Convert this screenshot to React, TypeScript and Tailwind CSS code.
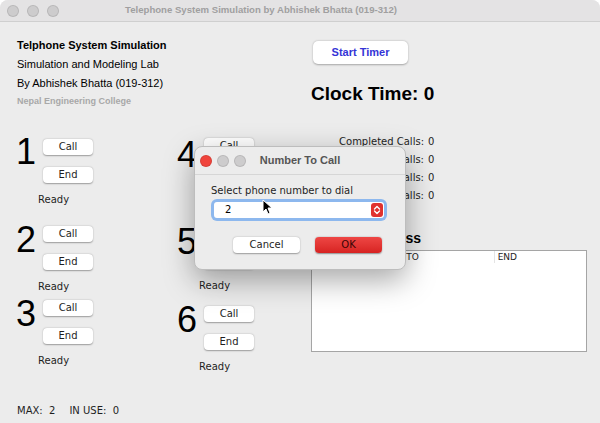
import React from "react";

const ui = { fontFamily: '"DejaVu Sans", "Liberation Sans", sans-serif' };
const helv = { fontFamily: '"Liberation Sans", Arial, sans-serif' };

const Btn = ({ label }: { label: string }) => (
    <div className="w-[50px] h-[16px] bg-white rounded-[4px] shadow-[0_0.5px_1.5px_rgba(0,0,0,0.35)] flex items-center justify-center text-[10px] text-[#1e1e1e] leading-none">
        {label}
    </div>
);

const Phone = ({ num, mt, digitTop }: { num: string; mt: string; digitTop: string }) => (
    <div className={"flex flex-col " + mt}>
        <div className="flex">
            <div className={"w-[27px] text-[36px] leading-none text-black " + digitTop} style={helv}>{num}</div>
            <div className="flex flex-col gap-[12px]">
                <Btn label="Call" />
                <Btn label="End" />
            </div>
        </div>
        <div className="ml-[22px] mt-[12px] text-[10px] leading-none text-[#1e1e1e]">Ready</div>
    </div>
);

const Light = ({ color }: { color: string }) => (
    <div className={"w-[12px] h-[12px] rounded-full border border-black/10 " + color} />
);

export default function App() {
    return (
        <div className="w-[600px] h-[423px] bg-[#ececec] relative overflow-hidden rounded-t-[8px]" style={ui}>
            {/* title bar */}
            <div className="h-[22px] bg-[#e4e3e4] border-b border-[#cfcfcf] flex items-center relative">
                <div className="flex gap-[8px] ml-[7px]">
                    <Light color="bg-[#cdcccd]" />
                    <Light color="bg-[#cdcccd]" />
                    <Light color="bg-[#cdcccd]" />
                </div>
                <div className="absolute inset-0 pr-[78px] flex items-center justify-center text-[9.6px] font-bold text-[#a09fa0]" style={helv}>
                    Telephone System Simulation by Abhishek Bhatta (019-312)
                </div>
            </div>

            {/* header */}
            <div className="flex">
                <div className="w-[296px] pl-[17px] pt-[16px] flex flex-col" style={helv}>
                    <div className="text-[11px] font-bold text-black leading-[14px]">Telphone System Simulation</div>
                    <div className="text-[11px] text-black leading-[14px] mt-[5px]">Simulation and Modeling Lab</div>
                    <div className="text-[11px] text-black leading-[14px] mt-[5px]">By Abhishek Bhatta (019-312)</div>
                    <div className="text-[9px] font-bold text-[#a8a8a8] leading-[12px] mt-[5px]">Nepal Engineering College</div>
                </div>
                <div className="flex flex-col pt-[19px] pl-[17px]">
                    <div className="w-[95px] h-[23px] bg-white rounded-[5px] shadow-[0_0.5px_2px_rgba(0,0,0,0.3)] flex items-center justify-center text-[11px] font-bold text-[#3434d6]" style={helv}>
                        Start Timer
                    </div>
                    <div className="mt-[20px] -ml-[2px] text-[19px] font-bold text-black leading-none" style={helv}>Clock Time: 0</div>
                </div>
            </div>

            {/* body */}
            <div className="flex">
                <div className="w-[177px] pl-[16px] flex flex-col">
                    <Phone num="1" mt="mt-[32px]" digitTop="-mt-[5px]" />
                    <Phone num="2" mt="mt-[21px]" digitTop="-mt-[4px]" />
                    <Phone num="3" mt="mt-[8px]" digitTop="-mt-[4px]" />
                </div>
                <div className="w-[134px] flex flex-col">
                    <Phone num="4" mt="mt-[31px]" digitTop="-mt-[1px]" />
                    <Phone num="5" mt="mt-[21px]" digitTop="-mt-[1px]" />
                    <Phone num="6" mt="mt-[15px]" digitTop="-mt-[4px]" />
                </div>
                <div className="flex flex-col pt-[29px]">
                    <div className="grid grid-cols-[113px_auto] gap-x-[4px] gap-y-[6px] text-[10px] leading-[12px] text-[#1e1e1e]">
                        <div className="text-right">Completed Calls:</div><div>0</div>
                        <div className="text-right">Blocked Calls:</div><div>0</div>
                        <div className="text-right">Dropped Calls:</div><div>0</div>
                        <div className="text-right">Busy Calls:</div><div>0</div>
                    </div>
                    <div className="w-[110px] flex justify-end mt-[29px]">
                        <span className="shrink-0 whitespace-nowrap text-[14px] font-bold leading-none text-black" style={helv}>Calls In Progress</span>
                    </div>
                    <div className="mt-[5px] w-[276px] h-[102px] bg-white border border-[#a5a5a5]">
                        <div className="grid grid-cols-3 text-[9px] leading-[12px] text-[#1e1e1e]">
                            <div className="pl-[3px] border-r border-[#e4e4e4]">FROM</div>
                            <div className="pl-[3px] border-r border-[#e4e4e4]">TO</div>
                            <div className="pl-[3px]">END</div>
                        </div>
                    </div>
                </div>
            </div>

            <div className="absolute left-[17px] top-[405px] text-[10px] leading-[12px] text-[#1e1e1e] flex gap-[14px]">
                <span>MAX:&nbsp; 2</span>
                <span>IN USE:&nbsp; 0</span>
            </div>

            {/* dialog */}
            <div className="absolute left-[194px] top-[146px] w-[212px] h-[124px] bg-[#ececec] rounded-[8px] border border-[#bdbdbd] shadow-[0_10px_30px_rgba(0,0,0,0.35)] flex flex-col">
                <div className="h-[28px] border-b border-[#d6d6d6] flex items-center relative">
                    <div className="flex gap-[5px] ml-[5px]">
                        <Light color="bg-[#f0443c]" />
                        <Light color="bg-[#cdcccd]" />
                        <Light color="bg-[#cdcccd]" />
                    </div>
                    <div className="absolute inset-0 flex items-center justify-center text-[11px] font-bold text-[#555]" style={helv}>
                        Number To Call
                    </div>
                </div>
                <div className="pl-[16px] pt-[10px] text-[10px] leading-[12px] text-[#1e1e1e]">Select phone number to dial</div>
                <div className="ml-[19px] mt-[5px] w-[170px] h-[16px] bg-white rounded-[3px] ring-[3px] ring-[#8db8ee] flex items-center justify-between">
                    <span className="pl-[11px] text-[10px] leading-none text-black">2</span>
                    <div className="w-[12px] h-[14px] mr-[1px] bg-[#e0322f] rounded-[3px] flex items-center justify-center">
                        <svg width="8" height="10" viewBox="0 0 8 10" fill="none" stroke="white" strokeWidth="1.4" strokeLinecap="round" strokeLinejoin="round">
                            <path d="M1.5 4 L4 1.5 L6.5 4" />
                            <path d="M1.5 6 L4 8.5 L6.5 6" />
                        </svg>
                    </div>
                </div>
                <div className="flex gap-[15px] ml-[38px] mt-[19px]">
                    <div className="w-[67px] h-[16px] bg-white rounded-[4px] shadow-[0_0.5px_1.5px_rgba(0,0,0,0.35)] flex items-center justify-center text-[10px] leading-none text-[#1e1e1e]">Cancel</div>
                    <div className="w-[67px] h-[16px] bg-gradient-to-b from-[#ee4644] to-[#d72221] rounded-[4px] shadow-[0_0.5px_1.5px_rgba(0,0,0,0.4)] flex items-center justify-center text-[10px] leading-none text-[#3a0505]">OK</div>
                </div>
            </div>

            {/* mouse pointer */}
            <svg className="absolute left-[262px] top-[199px]" width="10" height="16" viewBox="0 0 10 16">
                <path d="M1 1 L1 13 L4 10 L6 15 L8 14 L6 9 L10 9 Z" fill="black" stroke="white" strokeWidth="1" strokeLinejoin="round" />
            </svg>
        </div>
    );
}
